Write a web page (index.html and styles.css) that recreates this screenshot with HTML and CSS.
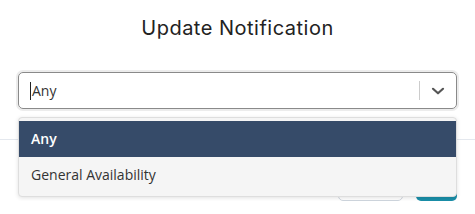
FILE: index.html
```html
<!DOCTYPE html>
<html lang="en">

<head>
    <meta charset="UTF-8">
    <title>Update Notification</title>
    <link rel="stylesheet" href="styles.css">
</head>

<body>
    <div class="modal">
        <div class="modal-header">
            <h1 class="modal-title">Update Notification</h1>
        </div>

        <div class="modal-body">
            <div class="select-wrap">
                <div class="select-control">
                    <div class="select-value"><span class="caret"></span>Any</div>
                    <div class="select-indicators">
                        <span class="select-sep"></span>
                        <svg class="select-arrow" width="20" height="20" viewBox="0 0 20 20">
                            <path d="M5 7.8 L10 12.3 L15 7.8" fill="none" stroke="#555" stroke-width="2.2" stroke-linecap="round" stroke-linejoin="round"/>
                        </svg>
                    </div>
                </div>

                <div class="select-menu">
                    <div class="select-option selected">Any</div>
                    <div class="select-option">General Availability</div>
                </div>
            </div>
        </div>

        <div class="modal-footer">
            <button class="btn btn-cancel">Cancel</button>
            <button class="btn btn-save">Save</button>
        </div>
    </div>
</body>

</html>
```

FILE: styles.css
```css
:root {
    --primary-color: #364b69;
    --accent-color: #1a8ea8;
    --menu-bg: #f5f5f5;
}

body {
    margin: 0;
    background-color: white;
    font-family: 'Open Sans', sans-serif;
    font-size: 14px;
    color: #333;
}

.modal {
    width: 475px;
}

.modal-header {
    height: 56px;
    display: flex;
    align-items: center;
    justify-content: center;
}

.modal-title {
    margin: 0;
    font-family: 'Inter', sans-serif;
    font-weight: 400;
    font-size: 20px;
    letter-spacing: 0.5px;
    color: #222;
}

.modal-body {
    padding: 16px 18px 0 18px;
    height: 67px;
}

.select-wrap {
    position: relative;
}

.select-control {
    height: 37px;
    box-sizing: border-box;
    border: 1px solid #8a8a8a;
    border-radius: 5px;
    box-shadow: 0 0 0 2px #ececec;
    display: flex;
    align-items: center;
}

.select-value {
    flex-grow: 1;
    padding-left: 11px;
    display: flex;
    align-items: center;
    color: #333;
}

.caret {
    width: 1px;
    height: 18px;
    background-color: #222;
    margin-right: 1px;
}

.select-indicators {
    display: flex;
    align-items: center;
    height: 100%;
}

.select-sep {
    width: 1px;
    height: 19px;
    background-color: #ccc;
}

.select-arrow {
    margin: 0 8px 0 8px;
}

.select-menu {
    position: absolute;
    top: 45px;
    left: 0;
    right: 0;
    padding: 3px 0 3px 0;
    background-color: var(--menu-bg);
    border: 1px solid #dedede;
    border-radius: 4px;
    box-shadow: 0 1px 4px rgba(0, 0, 0, 0.12);
    z-index: 2;
}

.select-option {
    height: 36px;
    line-height: 36px;
    padding-left: 12px;
    color: #333;
}

.select-option.selected {
    background-color: var(--primary-color);
    color: white;
    font-weight: 600;
}

.modal-footer {
    border-top: 1px solid #e4e8ee;
    padding: 24px 18px 0 18px;
    display: flex;
    justify-content: flex-end;
    gap: 13px;
}

.btn {
    height: 37px;
    border-radius: 5px;
    font-family: 'Open Sans', sans-serif;
    font-size: 14px;
    cursor: pointer;
}

.btn-cancel {
    width: 65px;
    background-color: white;
    border: 1px solid #cfd6de;
    color: #555;
}

.btn-save {
    width: 41px;
    background-color: var(--accent-color);
    border: none;
    color: white;
}
```
